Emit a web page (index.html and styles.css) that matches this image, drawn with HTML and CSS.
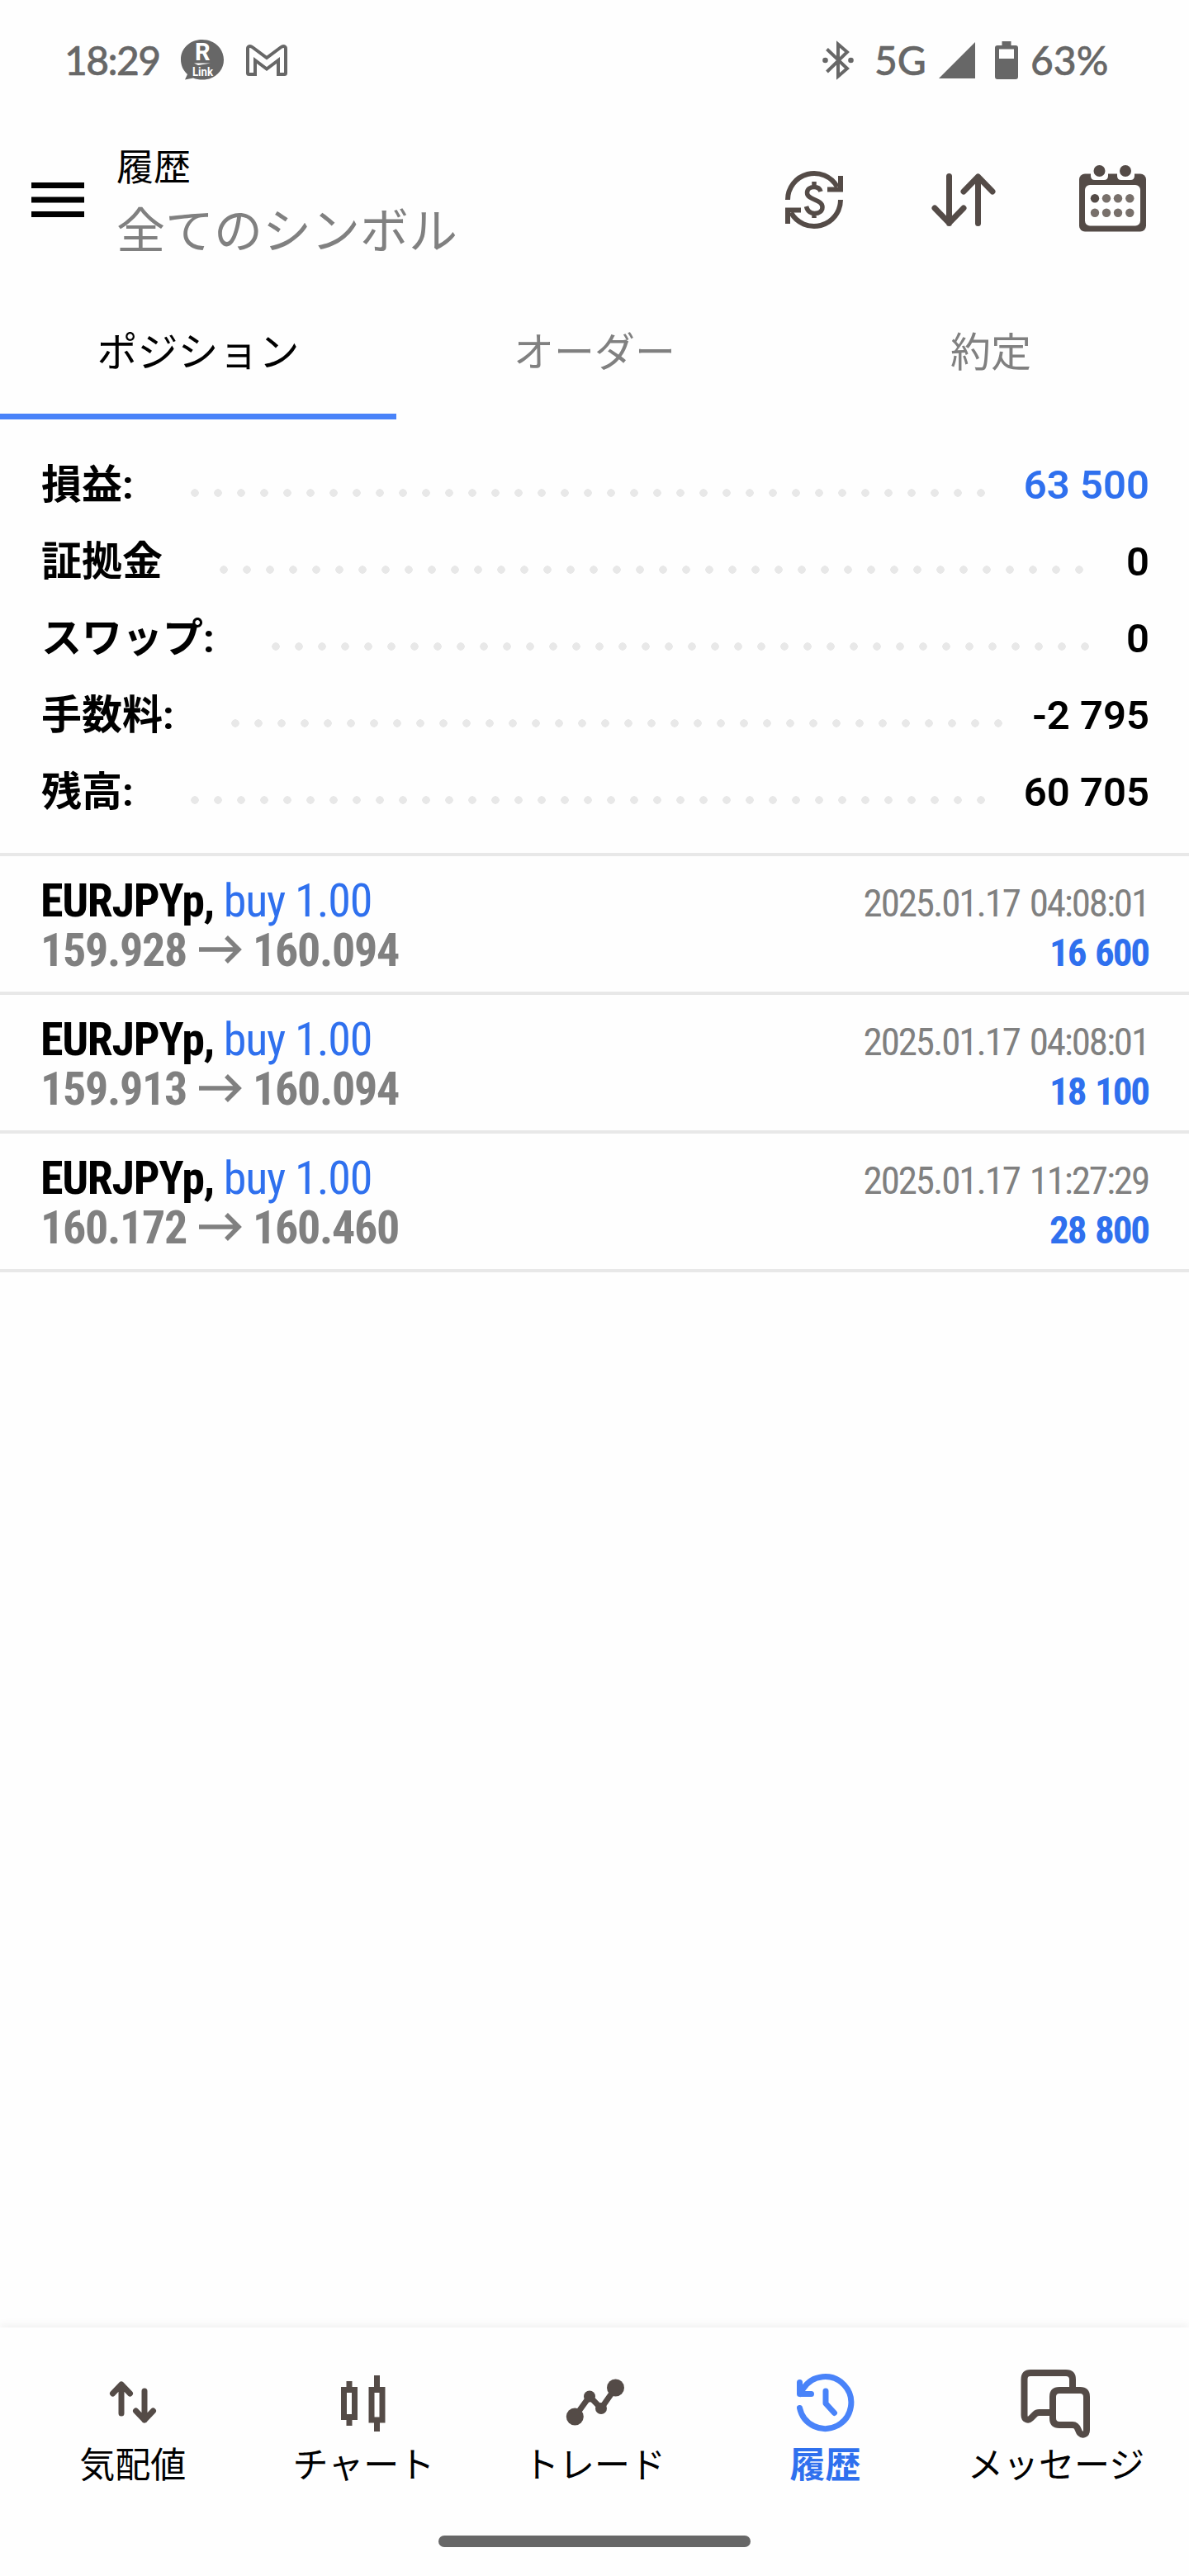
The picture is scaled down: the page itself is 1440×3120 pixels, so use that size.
FILE: index.html
```html
<!DOCTYPE html>
<html lang="ja">
<head>
<meta charset="UTF-8" />
<meta name="viewport" content="width=device-width, initial-scale=1.0" />
<title>履歴</title>
<link rel="stylesheet" href="styles.css">
</head>
<body>
<!-- ステータスバー -->
<div class="status-bar">
  <div class="status-left">
    <span class="clock">18:29</span>
    <svg class="icon-link" width="54" height="50" viewBox="0 0 54 50">
      <path d="M27 0C12 0 1 10.500 1 24c0 7.500 3 13.500 8 18L6 48.500l10-2C19.500 48 23 48.500 27 48.500 42 48.500 53 38 53 24.500S42 0 27 0Z" fill="#676767"/>
      <text x="18" y="25" class="link-r">R</text>
      <path d="M17 28.500h20l-15 2.500Z" fill="#fff"/>
      <text x="15" y="44" class="link-text" textLength="25" lengthAdjust="spacingAndGlyphs">Link</text>
    </svg>
    <svg class="icon-mail" width="50" height="38" viewBox="0 0 50 38">
      <path d="M2 5v29.500q0 1.500 1.500 1.500H11V19l14 10.500L39 19v17h7.500q1.500 0 1.500-1.500V5c0-3-3-4-5.500-2L25 16 7.500 3C5 1 2 2 2 5Z" fill="none" stroke="#676767" stroke-width="4"/>
    </svg>
  </div>
  <div class="status-right">
    <svg class="icon-bt" width="38" height="44" viewBox="0 0 38 44">
      <path d="M5.500 8.500 30 32 19 41.500V2.500L30 12 5.500 36" fill="none" stroke="#676767" stroke-width="4"/>
      <circle cx="3.500" cy="22" r="3.300" fill="#676767"/><circle cx="34.500" cy="22" r="3.300" fill="#676767"/>
    </svg>
    <span class="network">5G</span>
    <svg class="icon-signal" width="44" height="44" viewBox="0 0 44 44"><path d="M44 0v44H0Z" fill="#676767"/></svg>
    <svg class="icon-battery" width="28" height="46" viewBox="0 0 28 46">
      <path fill="#676767" fill-rule="evenodd" d="M8.500 0h11v5H25q3 0 3 3v35q0 3-3 3H3q-3 0-3-3V8q0-3 3-3h5.500ZM5 9.500v11.500h18V9.500Z"/>
    </svg>
    <span class="battery">63%</span>
  </div>
</div>

<!-- ヘッダー -->
<header>
  <svg class="menu" width="64" height="42" viewBox="0 0 64 42"><path d="M0 3.500h64M0 21h64M0 38.500h64" stroke="#000" stroke-width="7"/></svg>
  <div class="titles">
    <h1>履歴</h1>
    <p>全てのシンボル</p>
  </div>
  <div class="actions">
    <svg width="70" height="70" viewBox="0 0 70 70" fill="none" stroke="#544b47" stroke-width="6">
      <path d="M3 35A32 32 0 0 1 63 19.500M67 35A32 32 0 0 1 7 50.500"/>
      <path d="M67 6v16.500H51M3 64V47.500h16"/>
      <path d="M43 25c-1-3.500-4-5.500-8-5.500-5 0-8.500 2.800-8.500 7 0 9.500 18.500 7 18.500 17.500 0 4.800-4 7.500-9.500 7.500-5 0-8.500-2.500-10-8.500M35 13v5M35 52v5" stroke-width="5.500"/>
    </svg>
    <svg class="icon-sort" width="78" height="66" viewBox="0 0 78 66" fill="none" stroke="#544b47" stroke-width="7" stroke-linecap="round" stroke-linejoin="round">
      <path d="M21.500 4.500v57M4 43l17.500 18L39 43M56.500 61.500V5M39 23 56.500 5 74 23"/>
    </svg>
    <svg class="icon-calendar" width="81" height="81" viewBox="0 0 81 81">
      <rect x="0" y="10.500" width="81" height="70" rx="7" fill="#544b47"/>
      <rect x="7" y="24" width="67" height="49.500" rx="6" fill="#fff"/>
      <path d="M14 10v3q0 5 5 5h11q5 0 5-5v-3ZM46 10v3q0 5 5 5h11q5 0 5-5v-3Z" fill="#fff"/>
      <circle cx="24.500" cy="7" r="7" fill="#544b47"/><circle cx="56" cy="7" r="7" fill="#544b47"/>
      <circle cx="19" cy="40.300" r="5.200" fill="#544b47"/>
      <g fill="#78706b">
        <circle cx="33" cy="40.300" r="5.200"/><circle cx="47" cy="40.300" r="5.200"/><circle cx="61.300" cy="40.300" r="5.200"/>
        <circle cx="19" cy="57.800" r="5.200"/><circle cx="33" cy="57.800" r="5.200"/><circle cx="47" cy="57.800" r="5.200"/><circle cx="61.300" cy="57.800" r="5.200"/>
      </g>
    </svg>
  </div>
</header>

<!-- タブ -->
<nav class="tabs">
  <a class="active">ポジション</a>
  <a>オーダー</a>
  <a>約定</a>
</nav>

<main>
  <!-- 集計 -->
  <section class="summary">
    <div class="summary-row"><span>損益:</span><i class="dots"></i><b class="blue">63 500</b></div>
    <div class="summary-row"><span>証拠金</span><i class="dots"></i><b>0</b></div>
    <div class="summary-row"><span>スワップ:</span><i class="dots"></i><b>0</b></div>
    <div class="summary-row"><span>手数料:</span><i class="dots"></i><b>-2 795</b></div>
    <div class="summary-row"><span>残高:</span><i class="dots"></i><b>60 705</b></div>
  </section>

  <!-- 取引一覧 -->
  <section class="deals">
    <article class="deal">
      <div class="deal-info">
        <h3>EURJPYp, <span>buy 1.00</span></h3>
        <p>159.928<svg class="arrow" width="52" height="36" viewBox="0 0 52 36"><path d="M0 18h48M33 3l15 15-15 15"/></svg>160.094</p>
      </div>
      <div class="deal-result"><time>2025.01.17 04:08:01</time><b>16 600</b></div>
    </article>
    <article class="deal">
      <div class="deal-info">
        <h3>EURJPYp, <span>buy 1.00</span></h3>
        <p>159.913<svg class="arrow" width="52" height="36" viewBox="0 0 52 36"><path d="M0 18h48M33 3l15 15-15 15"/></svg>160.094</p>
      </div>
      <div class="deal-result"><time>2025.01.17 04:08:01</time><b>18 100</b></div>
    </article>
    <article class="deal">
      <div class="deal-info">
        <h3>EURJPYp, <span>buy 1.00</span></h3>
        <p>160.172<svg class="arrow" width="52" height="36" viewBox="0 0 52 36"><path d="M0 18h48M33 3l15 15-15 15"/></svg>160.460</p>
      </div>
      <div class="deal-result"><time>2025.01.17 11:27:29</time><b>28 800</b></div>
    </article>
  </section>
</main>

<!-- 下部ナビゲーション -->
<footer>
  <nav class="bottom-nav">
    <a>
      <svg width="84" height="84" viewBox="0 0 84 84" fill="none" stroke="#544b47" stroke-width="7" stroke-linecap="round" stroke-linejoin="round"><path d="M28 55V20M17.500 31 28 20l10.500 11M56 28v35M45.500 52 56 63l10.500-11"/></svg>
      <span>気配値</span>
    </a>
    <a>
      <svg width="84" height="84" viewBox="0 0 84 84" fill="none" stroke="#544b47" stroke-width="7"><path d="M18.500 26.500h13v33h-13ZM52 26.500h13v36.500H52ZM25 16v8M25 62v8M58.500 9v15M58.500 65v12"/></svg>
      <span>チャート</span>
    </a>
    <a>
      <svg width="84" height="84" viewBox="0 0 84 84"><path d="M18.300 59 36 34.500l14 14.500 17.500-25" fill="none" stroke="#544b47" stroke-width="7"/><g fill="#544b47"><circle cx="18.300" cy="59" r="10.500"/><circle cx="36" cy="34.500" r="7"/><circle cx="50" cy="49" r="7"/><circle cx="67.500" cy="24" r="10.500"/></g></svg>
      <span>トレード</span>
    </a>
    <a class="active">
      <svg width="84" height="84" viewBox="0 0 84 84" fill="none" stroke="#4983f9" stroke-width="7" stroke-linecap="round" stroke-linejoin="round"><path d="M10.500 48.500a31.500 31.500 0 1 0 4-23L11 31.500M10.500 17.500v14H24.500M42 28v15l10.500 11.500"/></svg>
      <span>履歴</span>
    </a>
    <a>
      <svg width="84" height="84" viewBox="0 0 84 84" fill="none" stroke="#544b47" stroke-width="8" stroke-linejoin="round"><path d="M62 23V14q0-8-8-8H11Q3.500 6 3.500 14v43c0 6 5 7 8 4l5-5q2-2 5-2H34"/><path d="M46 27h25q8 0 8 8v40c0 6-5 7-8 4-3-3-2-10-9-10H46q-8 0-8-8V35q0-8 8-8Z"/></svg>
      <span>メッセージ</span>
    </a>
  </nav>
  <div class="home-bar"></div>
</footer>
</body>
</html>
```
FILE: styles.css
```css
:root {
  --font-jp: Roboto, "Noto Sans CJK JP", sans-serif;
  --color-accent: #4983f9;
  --color-blue: #2f70ee;
  --color-gray: #808080;
  --color-line: #e8e8e8;
}

* { box-sizing: border-box; }

body {
  margin: 0; height: 3120px;
  display: flex; flex-direction: column;
  font-family: var(--font-jp);
  color: #000; background: #fefefe;
}
h1, h3, p { margin: 0; font-weight: 400; }
svg { display: block; flex: none; overflow: visible; }

/* ステータスバー */
.status-bar {
  height: 146px; padding: 0 98px 0 78px;
  display: flex; justify-content: space-between; align-items: center;
  font-family: Lato, sans-serif; font-size: 48px; color: #676767;
  font-weight: 500; line-height: 50px; white-space: nowrap;
  -webkit-text-stroke: 0.5px #676767;
}
.status-left, .status-right { display: flex; align-items: center; }
.clock { width: 115px; letter-spacing: -1.6px; }
.icon-link { margin-left: 25px; -webkit-text-stroke: 0; }
.link-r { font: bold 29px Roboto, sans-serif; fill: #fff; }
.link-text { font: bold 14px Roboto, sans-serif; fill: #fff; }
.icon-mail { margin-left: 26px; }
.network { margin-left: 25px; width: 64px; }
.icon-signal { margin-left: 14px; }
.icon-battery { margin-left: 24px; }
.battery { margin-left: 15px; width: 94px; }

/* ヘッダー */
header {
  height: 214px; padding: 0 52px 0 38px;
  display: flex; align-items: flex-start;
}
.menu { margin-top: 75px; }
.titles { margin-left: 39px; padding-top: 25px; }
.titles h1 { font-size: 45px; line-height: 66px; }
.titles p { margin-top: 4px; font-size: 59px; line-height: 80px; color: var(--color-gray); }
.actions {
  margin-left: auto; margin-top: 54px; height: 84px;
  display: flex; align-items: center; gap: 101px;
}
.icon-sort { margin-left: 6px; }
.icon-calendar { margin-bottom: 3px; }

/* タブ */
.tabs { display: flex; height: 148px; }
.tabs a {
  flex: 1; padding-top: 31px;
  text-align: center; font-size: 49px; line-height: 74px; color: var(--color-gray);
}
.tabs a.active { color: #000; border-bottom: 7px solid var(--color-accent); }

/* 集計 */
.summary {
  padding: 33px 48px 27px 50px; height: 529px;
  border-bottom: 4px solid var(--color-line);
}
.summary-row {
  height: 93px; display: flex; align-items: center;
  font-size: 49px; font-weight: 700; line-height: 72px;
}
.summary-row b { font-weight: 600; }
.dots {
  flex: 1; height: 10px; margin: 18px 35px 0 60px;
  background: radial-gradient(circle at center, var(--color-line) 4.5px, transparent 5px) 0 0 / 28px 10px repeat-x;
}
.blue { color: var(--color-blue); }

/* 取引一覧 */
.deal {
  height: 168px; padding: 24px 49px 0 49px;
  display: flex; justify-content: space-between;
  border-bottom: 4px solid var(--color-line);
  font-stretch: 75%; white-space: nowrap;
}
.deal-info { font-size: 56px; line-height: 60px; letter-spacing: -1.3px; }
.deal-info h3 { font-size: inherit; font-weight: 700; }
.deal-info h3 span { font-weight: 400; letter-spacing: -1.1px; color: var(--color-blue); }
.deal-info p { font-weight: 700; color: var(--color-gray); }
.arrow {
  display: inline-block; vertical-align: 2px; margin: 0 13px 0 15px;
  fill: none; stroke: currentColor; stroke-width: 5.5;
}
.deal-result {
  display: flex; flex-direction: column; align-items: flex-end;
  padding-top: 3px; font-size: 47px; line-height: 60px;
  letter-spacing: -2.1px; word-spacing: 3px;
}
.deal-result time { color: var(--color-gray); }
.deal-result b { font-weight: 700; color: var(--color-blue); }

/* 下部ナビゲーション */
footer {
  margin-top: auto; height: 301px;
  box-shadow: 0 -3px 10px rgba(0, 0, 0, 0.06);
}
.bottom-nav { display: flex; padding: 49px 21px 0; }
.bottom-nav a {
  flex: 1 0 0; display: flex; flex-direction: column; align-items: center;
  font-size: 43px; line-height: 68px; white-space: nowrap;
}
.bottom-nav .active { color: var(--color-blue); font-weight: 700; }
.home-bar {
  width: 378px; height: 14px; margin: 51px auto 0;
  border-radius: 7px; background: #676767;
}
```
